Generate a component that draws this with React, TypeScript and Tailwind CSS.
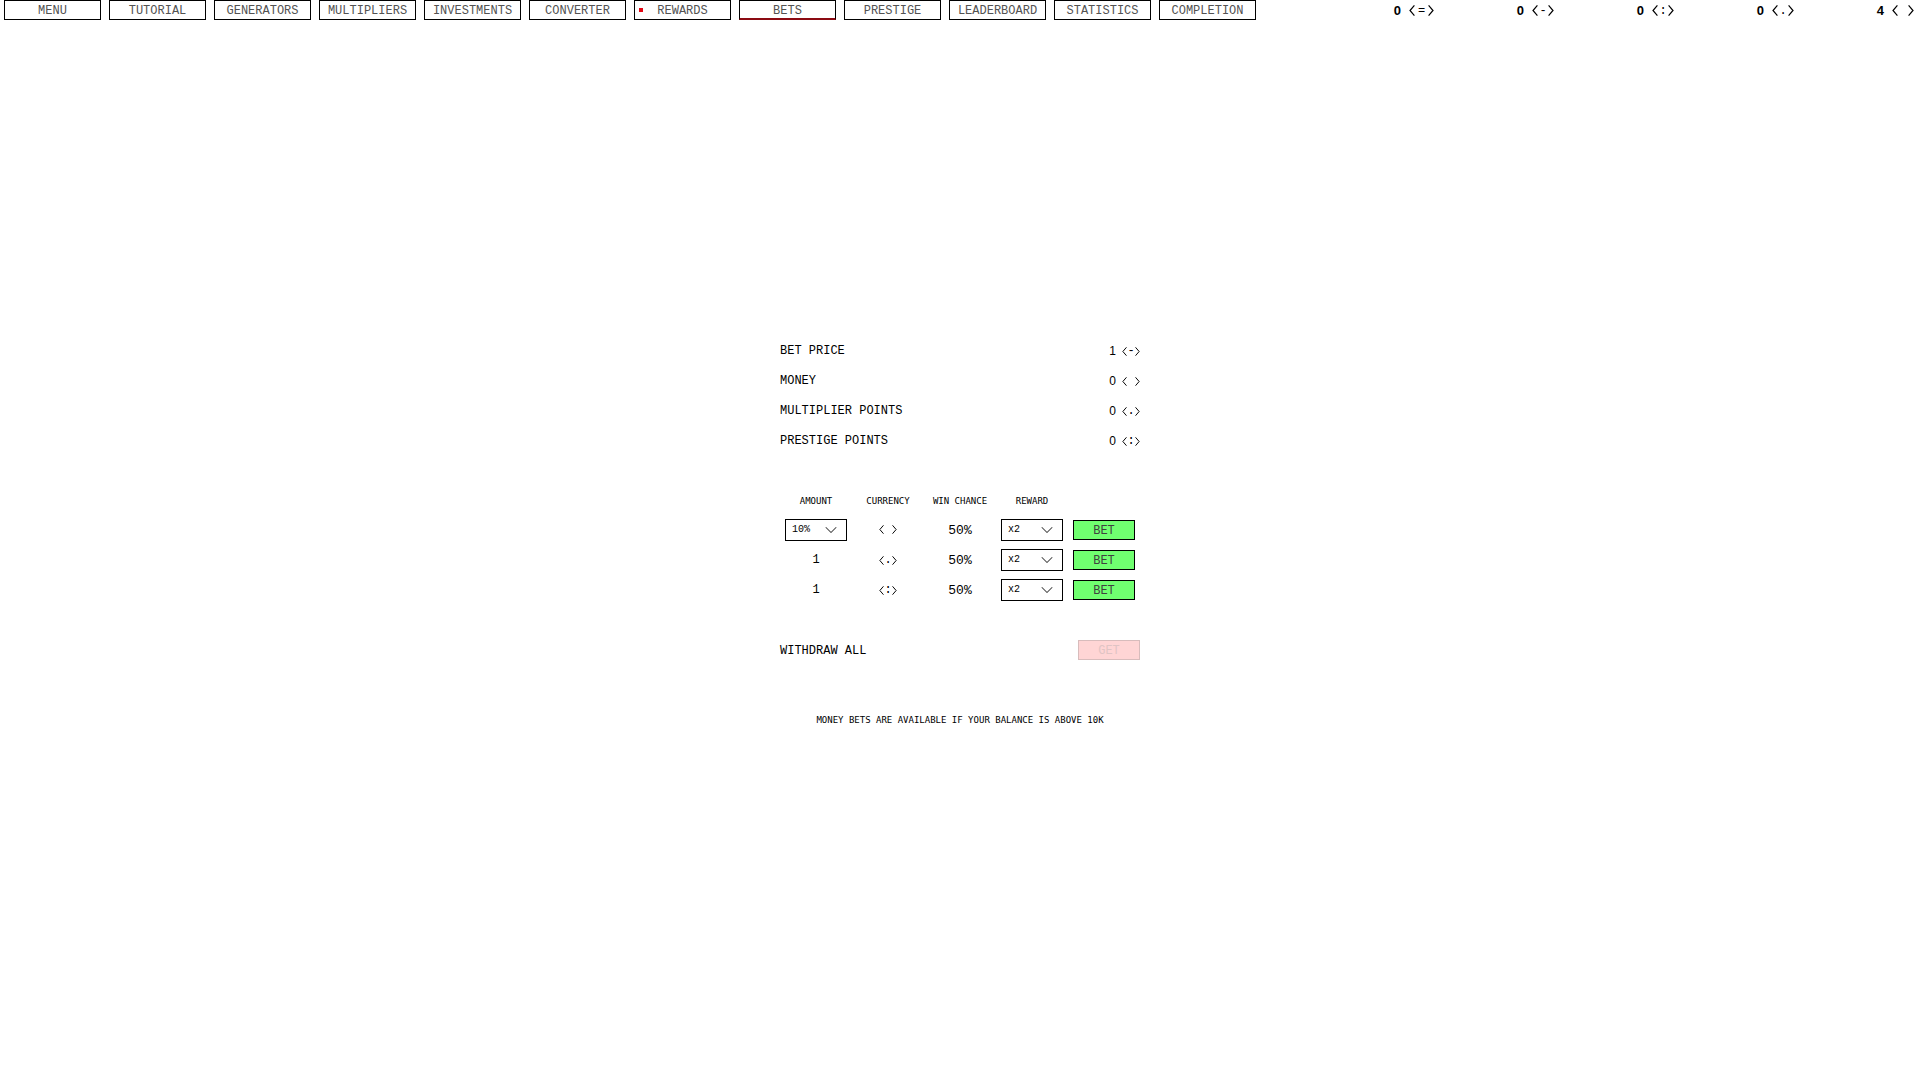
import { ChevronDown } from 'lucide-react'

type Mark = '=' | '-' | ':' | '.' | ' '

const tabs = [
  'MENU',
  'TUTORIAL',
  'GENERATORS',
  'MULTIPLIERS',
  'INVESTMENTS',
  'CONVERTER',
  'REWARDS',
  'BETS',
  'PRESTIGE',
  'LEADERBOARD',
  'STATISTICS',
  'COMPLETION',
]

const wallet: { amount: number; mark: Mark }[] = [
  { amount: 0, mark: '=' },
  { amount: 0, mark: '-' },
  { amount: 0, mark: ':' },
  { amount: 0, mark: '.' },
  { amount: 4, mark: ' ' },
]

const balances: { label: string; amount: number; mark: Mark }[] = [
  { label: 'BET PRICE', amount: 1, mark: '-' },
  { label: 'MONEY', amount: 0, mark: ' ' },
  { label: 'MULTIPLIER POINTS', amount: 0, mark: '.' },
  { label: 'PRESTIGE POINTS', amount: 0, mark: ':' },
]

const bets: { id: string; percent: boolean; mark: Mark; chance: string }[] = [
  { id: 'money', percent: true, mark: ' ', chance: '50%' },
  { id: 'multiplier points', percent: false, mark: '.', chance: '50%' },
  { id: 'prestige points', percent: false, mark: ':', chance: '50%' },
]

// currency sign: a pair of angle brackets around the currency's mark
function Currency({ mark, large = false }: { mark: Mark; large?: boolean }) {
  const bracket = large ? 'w-[6px] h-[11px]' : 'w-[5px] h-[9px]'
  const gap = large ? (mark === '=' ? 'w-[13px]' : 'w-[10px]') : 'w-2'

  return (
    <span className="inline-flex items-center">
      <svg viewBox="0 0 6 11" className={bracket} fill="none" stroke="currentColor" strokeWidth="1.2">
        <path d="M5.4 0.4 L1 5.5 L5.4 10.6" />
      </svg>
      <span className={`${gap} flex justify-center whitespace-pre`}>{mark}</span>
      <svg viewBox="0 0 6 11" className={bracket} fill="none" stroke="currentColor" strokeWidth="1.2">
        <path d="M0.6 0.4 L5 5.5 L0.6 10.6" />
      </svg>
    </span>
  )
}

function Dropdown({ label, options }: { label: string; options: string[] }) {
  return (
    <div className="relative mx-auto w-[62px]">
      <select
        aria-label={label}
        className="block w-full h-[22px] pl-[6px] appearance-none border border-black bg-white text-[10px] leading-5"
      >
        {options.map(o => (
          <option key={o}>{o}</option>
        ))}
      </select>
      <ChevronDown
        size={20}
        strokeWidth={1.25}
        className="absolute right-[6px] top-px text-neutral-700 pointer-events-none"
      />
    </div>
  )
}

export default function App() {
  return (
    <div className="min-h-screen flex flex-col bg-white text-black text-[12px] leading-4 font-['Liberation_Mono',monospace]">
      <header className="flex justify-between">
        <nav className="flex gap-2 pl-1">
          {tabs.map(tab => (
            <button
              key={tab}
              className={
                tab === 'BETS'
                  ? 'relative w-[97px] h-5 pt-0.5 border border-b-2 border-black border-b-[#8b0a12] text-neutral-600'
                  : 'relative w-[97px] h-5 pt-0.5 border border-black text-neutral-600'
              }
            >
              {tab === 'REWARDS' && (
                <span className="absolute left-1 top-[7px] size-1 bg-[#e30613]" />
              )}
              {tab}
            </button>
          ))}
        </nav>

        <div className="flex pr-[6px]">
          {wallet.map(w => (
            <div key={w.mark} className="w-[120px] h-5 pt-px flex items-center justify-end gap-2">
              <b className="text-[13px] font-['Liberation_Sans',sans-serif]">{w.amount}</b>
              <Currency mark={w.mark} large />
            </div>
          ))}
        </div>
      </header>

      <main className="flex-1 flex flex-col items-center justify-center pb-5">
        <div className="w-[360px]">
          {balances.map(b => (
            <div key={b.label} className="h-[30px] flex items-center justify-between">
              <span>{b.label}</span>
              <span className="flex items-center gap-[6px]">
                <span className="font-['Liberation_Sans',sans-serif]">{b.amount}</span>
                <Currency mark={b.mark} />
              </span>
            </div>
          ))}

          <table className="w-full my-[30px] table-fixed text-center">
            <thead>
              <tr className="h-[30px] text-[9px] font-['DejaVu_Sans_Mono',monospace]">
                <th className="font-normal">AMOUNT</th>
                <th className="font-normal">CURRENCY</th>
                <th className="font-normal">WIN CHANCE</th>
                <th className="font-normal">REWARD</th>
                <td />
              </tr>
            </thead>
            <tbody>
              {bets.map(bet => (
                <tr key={bet.id} className="h-[30px]">
                  <td className="pb-0.5">
                    {bet.percent ? (
                      <Dropdown label={`Amount of ${bet.id}`} options={['10%', '25%', '50%', '100%']} />
                    ) : (
                      1
                    )}
                  </td>
                  <td>
                    <Currency mark={bet.mark} />
                  </td>
                  <td className="text-[13px]">{bet.chance}</td>
                  <td className="pb-0.5">
                    <Dropdown label={`Reward for ${bet.id}`} options={['x2', 'x3', 'x5', 'x10']} />
                  </td>
                  <td className="pb-0.5">
                    <button className="block mx-auto w-[62px] h-5 pt-px border border-black bg-[#70ff70] text-neutral-700">
                      BET
                    </button>
                  </td>
                </tr>
              ))}
            </tbody>
          </table>

          <div className="h-[30px] flex items-center justify-between">
            <span>WITHDRAW ALL</span>
            <button
              disabled
              className="w-[62px] h-5 mb-0.5 pt-px border border-[#d8bcbc] bg-[#ffd5d5] text-[#dfc4c4]"
            >
              GET
            </button>
          </div>

          <p className="h-12 mt-[30px] flex items-center justify-center text-[9px] whitespace-nowrap font-['DejaVu_Sans_Mono',monospace]">
            MONEY BETS ARE AVAILABLE IF YOUR BALANCE IS ABOVE 10K
          </p>
        </div>
      </main>
    </div>
  )
}
